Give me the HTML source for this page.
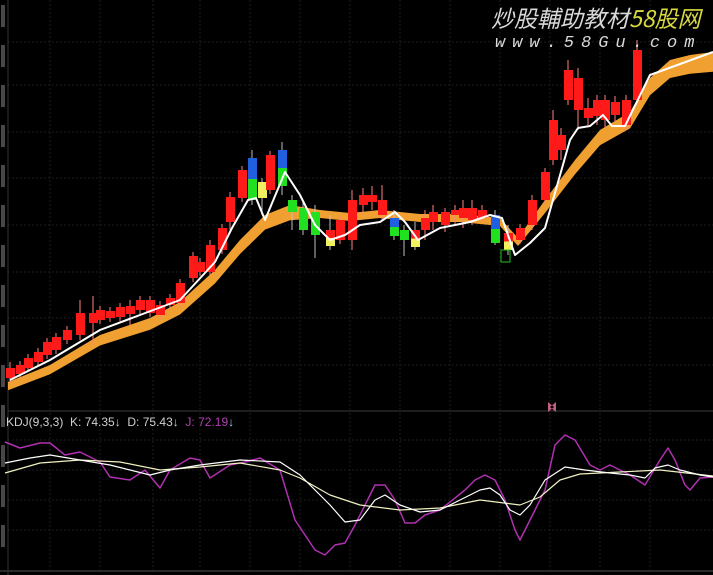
<!DOCTYPE html>
<html><head><meta charset="utf-8"><style>
html,body{margin:0;padding:0;background:#000;overflow:hidden}
#w{position:relative;width:713px;height:575px;background:#000}
svg{position:absolute;left:0;top:0}
.t{position:absolute;font-family:"Liberation Sans","Noto Sans CJK SC",sans-serif;white-space:nowrap}
</style></head><body><div id="w">
<svg id="s" width="713" height="575" viewBox="0 0 713 575"></svg>
<div class="t" style="left:491px;top:3px;font-size:23px;line-height:28px;color:#d8d8d8;font-style:italic;font-family:'Noto Sans CJK SC',sans-serif">炒股輔助教材<span style="color:#d8d840">58股网</span></div>
<div class="t" style="left:495px;top:34px;font-size:17px;line-height:20px;color:#d8d8d8;font-style:italic;letter-spacing:7px;font-family:'Liberation Mono',monospace">www.58Gu.com</div>
<div class="t" style="left:6px;top:415px;font-size:12px;color:#d0d0d0">KDJ(9,3,3) &nbsp;K: 74.35↓ &nbsp;D: 75.43↓ &nbsp;<span style="color:#b040b0">J: 72.19</span><span style="color:#a0c8e8">↓</span></div>
</div>
<script>
var s=document.getElementById('s'),h='';
function L(x1,y1,x2,y2,c,w,d){h+='<line x1="'+x1+'" y1="'+y1+'" x2="'+x2+'" y2="'+y2+'" stroke="'+c+'" stroke-width="'+(w||1)+'"'+(d?' stroke-dasharray="'+d+'"':'')+'/>';}
[50,100,153,200,250,300,350,400,450,500,550,600,650].forEach(function(x){L(x,0,x,410,'#1c1c1c',1,'2,2');L(x,413,x,570,'#1c1c1c',1,'2,2');});
[42,85,132,178,225,272,318,365].forEach(function(y){L(8,y,713,y,'#1c1c1c',1,'2,2');});
[440,470,500,530].forEach(function(y){L(8,y,713,y,'#1c1c1c',1,'2,2');});
L(8,411,713,411,'#3a3a3a',1);L(0,571,713,571,'#555',1);L(8,0,8,575,'#333',1);
for(var y=5;y<560;y+=40){h+='<rect x="1" y="'+y+'" width="4" height="22" fill="#777" opacity="0.6"/>';}
var up=[[8,382],[50,365],[100,335],[150,318],[180,302],[215,270],[240,240],[265,215],[290,205],[320,210],[350,213],[380,210],[420,214],[460,214],[500,218],[518,238],[545,200],[575,160],[600,130],[630,112],[650,78],[670,60],[690,55],[713,52]];
var lo=up.map(function(p){var t=p[0]<300?8+p[0]/40:(p[0]<520?8:12+(p[0]-520)/25);return [p[0],p[1]+t];});
var pts=up.map(function(p){return p.join(',')}).concat(lo.reverse().map(function(p){return p.join(',')})).join(' ');
h+='<polygon points="'+pts+'" fill="#f0a030"/>';
var R='#ff1a1a',G='#20e020',B='#2060e0',Y='#f0f060';
var C=[[10,368,378,362,383],[20,365,374],[28,358,368],[38,352,362],[47,342,355],[56,337,350],[67,330,340],[80,313,335,300,340],[93,313,323,296,345],[100,310,320],[110,311,318],[120,307,317],[130,306,314,300,325],[140,300,310],[150,300,313],[160,305,315],[170,298,305],[180,283,303],[193,256,278],[200,262,272],[210,245,272,240,275],[222,228,250],[230,197,222,192,230],[242,170,198],[252,158,200,150,205,'bg'],[262,182,198,178,215,'y'],[270,155,190],[282,150,186,142,195,'bg'],[292,200,212,195,230,'g'],[303,208,230,200,235,'g'],[315,212,235,205,258,'g'],[330,230,246,215,250,'ry'],[340,220,240],[352,200,240,190,250],[363,195,205,188,215],[372,195,202,186,210],[382,200,215,185,220],[394,218,236,210,240,'bg'],[404,230,240,225,256,'g'],[415,230,247,222,250,'ry'],[425,218,230,210,240],[433,212,222,205,230],[445,212,225,208,232],[455,210,215,205,225],[463,208,218,200,228],[472,208,220,200,225],[482,210,218,205,222],[495,215,243,210,245,'bg'],[508,233,250,225,255,'ry'],[520,228,240],[532,200,225,195,230],[545,172,200],[553,120,160,110,165],[561,135,150,128,160],[568,70,100,60,105],[578,78,110,68,130],[588,108,118,98,125],[597,100,116,95,125],[605,100,120,95,128],[615,102,115,96,122],[626,100,125,95,130],[637,50,100,40,105]];
C.forEach(function(c){var x=c[0],t=c[1],b=c[2],wt=c[3]||t-4,wb=c[4]||b+4,k=c[5]||'r';
 L(x,wt,x,wb,k=='r'?'#ff8080':'#c0c0c0',1);
 if(k=='r')h+='<rect x="'+(x-4)+'" y="'+t+'" width="9" height="'+(b-t)+'" fill="'+R+'"/>';
 else if(k=='g')h+='<rect x="'+(x-4)+'" y="'+t+'" width="9" height="'+(b-t)+'" fill="'+G+'"/>';
 else if(k=='y')h+='<rect x="'+(x-4)+'" y="'+t+'" width="9" height="'+(b-t)+'" fill="'+Y+'"/>';
 else if(k=='bg'){var m=(t+b)/2;h+='<rect x="'+(x-4)+'" y="'+t+'" width="9" height="'+(m-t)+'" fill="'+B+'"/><rect x="'+(x-4)+'" y="'+m+'" width="9" height="'+(b-m)+'" fill="'+G+'"/>';}
 else if(k=='ry'){var m=(t+b)/2;h+='<rect x="'+(x-4)+'" y="'+t+'" width="9" height="'+(m-t)+'" fill="'+R+'"/><rect x="'+(x-4)+'" y="'+m+'" width="9" height="'+(b-m)+'" fill="'+Y+'"/>';}
});
h+='<rect x="501" y="250" width="9" height="12" fill="none" stroke="#20c020"/>';
function P(a,c,w){h+='<polyline points="'+a.map(function(p){return p.join(',')}).join(' ')+'" fill="none" stroke="'+c+'" stroke-width="'+w+'" stroke-linejoin="round"/>';}
P([[10,380],[50,360],[100,330],[140,315],[180,300],[215,262],[232,228],[248,200],[256,198],[265,220],[285,172],[300,195],[315,225],[330,240],[345,235],[360,225],[380,222],[395,212],[405,222],[418,240],[440,228],[470,222],[490,215],[502,218],[515,255],[530,243],[545,228],[570,140],[578,128],[590,126],[603,115],[612,126],[625,126],[650,75],[713,52]],'#ffffff',2);
h+='<path d="M548 402 l6 5 l-6 5z M556 402 l-6 5 l6 5z" fill="#c06080"/>';
P([[5,442],[20,448],[40,443],[50,443],[65,455],[80,452],[100,462],[110,477],[130,480],[145,470],[160,488],[170,470],[190,458],[200,460],[210,478],[230,465],[245,462],[260,458],[280,470],[295,520],[315,550],[325,555],[335,545],[345,543],[355,525],[375,485],[385,485],[395,500],[405,523],[415,523],[425,515],[440,510],[465,490],[475,480],[485,475],[495,480],[505,500],[515,530],[520,540],[530,520],[545,490],[555,445],[565,435],[575,440],[590,465],[600,470],[610,465],[630,475],[645,485],[660,460],[668,448],[675,460],[685,485],[690,490],[700,478],[713,477]],'#b030b0',1.5);
P([[5,473],[40,463],[80,460],[120,462],[160,470],[200,467],[240,463],[280,470],[300,478],[330,495],[360,505],[400,510],[440,508],[480,500],[520,505],[540,497],[560,480],[580,474],[620,472],[660,470],[713,476]],'#f0f0c0',1.2);
P([[5,463],[30,458],[50,455],[80,460],[110,465],[150,475],[170,470],[200,465],[240,460],[280,462],[300,475],[320,495],[330,505],[345,522],[360,520],[375,500],[385,495],[400,505],[420,512],[440,510],[460,500],[480,490],[490,488],[500,495],[510,510],[520,515],[530,505],[545,480],[565,467],[585,470],[610,473],[630,475],[645,478],[655,468],[668,465],[680,470],[700,475],[713,477]],'#ffffff',1.2);
s.innerHTML=h;
</script>
</body></html>
